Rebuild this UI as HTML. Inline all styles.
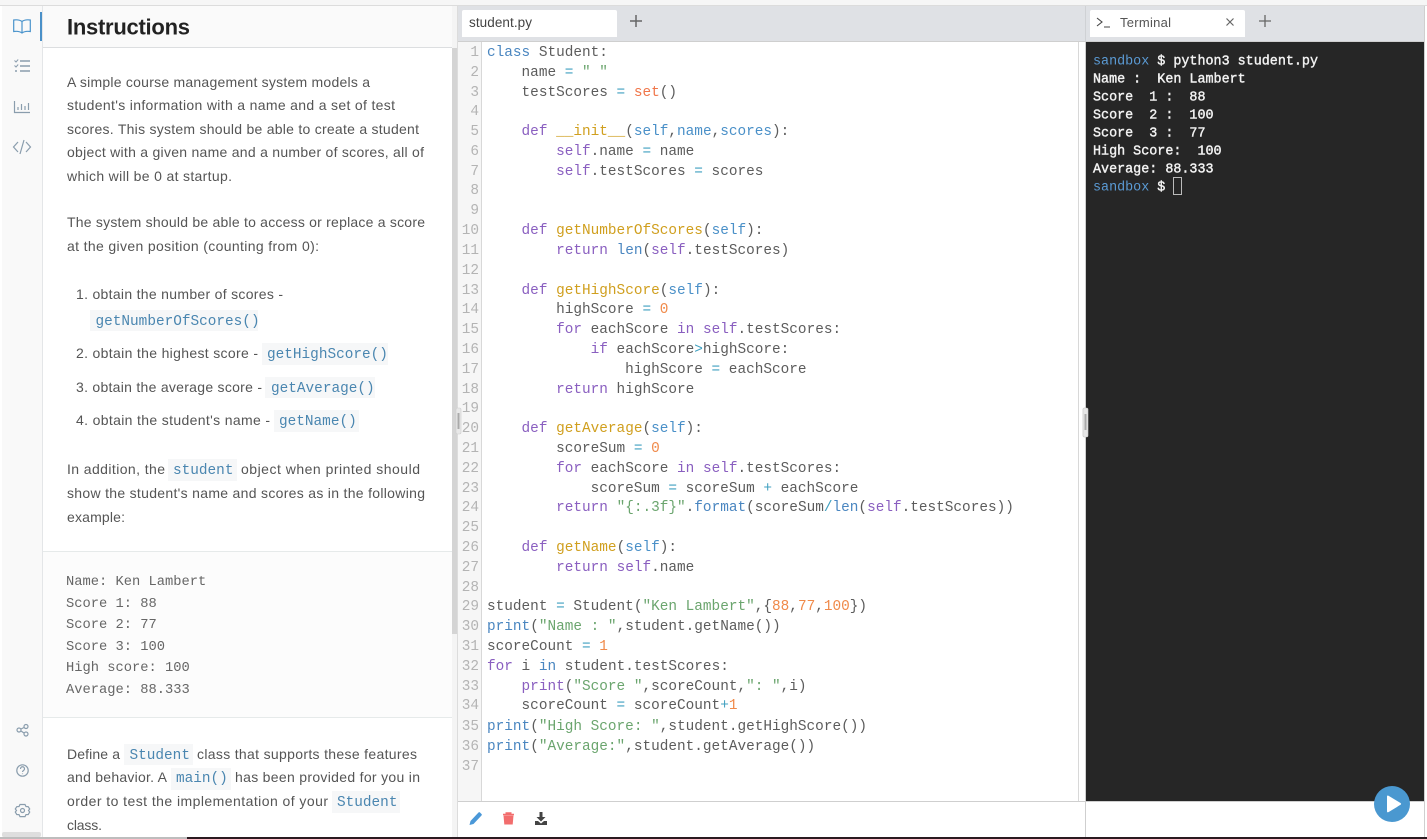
<!DOCTYPE html>
<html><head><meta charset="utf-8"><title>Instructions</title>
<style>
html,body{margin:0;padding:0;width:1427px;height:839px;overflow:hidden;background:#fff}
svg{display:block}
text{white-space:pre}
.t{font-family:"Liberation Sans",sans-serif;font-size:14px;fill:#555}
.m{font-family:"Liberation Mono",monospace;font-size:14.4px}
.c{fill:#4a86b0}
.p{font-family:"Liberation Mono",monospace;font-size:13.76px;fill:#666}
.code text{font-family:"Liberation Mono",monospace;font-size:14.4px;fill:#5c5c5c}
.ln{font-family:"Liberation Mono",monospace;font-size:14.4px;fill:#b4b4b4;text-anchor:end}
.term{font-family:"Liberation Mono",monospace;font-size:13.4px;fill:#f2f2f2;stroke:#f2f2f2;stroke-width:.4}
.k{fill:#4a86c0}.d{fill:#8a5fc0}.f{fill:#d09f1e}.a{fill:#4a90c8}.s{fill:#6ba56e}.n{fill:#f08a4a}.o{fill:#40a0c0}.r{fill:#f0764a}
.ic{fill:none;stroke:#8a9dad;stroke-width:1.2}
</style></head><body>
<svg width="1427" height="839" viewBox="0 0 1427 839" xmlns="http://www.w3.org/2000/svg">
<rect width="1427" height="839" fill="#fff"/>
<rect width="1427" height="5" fill="#f6f6f6"/>
<rect y="5" width="1427" height="1" fill="#dcdcdc"/>
<!-- rail -->
<rect x="2" y="6" width="40" height="831" fill="#f9f9f9"/>
<rect x="42" y="6" width="1" height="831" fill="#e4e6e8"/>
<rect x="40" y="12" width="2" height="29" fill="#4a90c8"/>
<path d="M22 21.5c-2-1.500-5-2-8.300-1.500v11.500c3.300-.5 6.300 0 8.300 1.500 2-1.500 5-2 8.300-1.500V20c-3.300-.5-6.300 0-8.300 1.500zM22 21.500V33" fill="none" stroke="#4a94cc" stroke-width="1.200"/>
<g class="ic"><path d="M20 61h10M20 66h10M20 71h10" stroke-width="1.500"/><path d="M14.500 60.500l1.500 1.500 2.200-2.500M14.500 65.500l1.500 1.500 2.200-2.500" stroke-width="1"/><path d="M15 71h2" stroke-width="1.500"/></g>
<g class="ic"><path d="M14.500 101v11.500H30"/><path d="M18 110v-3M21.500 110v-6M25 110v-4M28.500 110v-7"/></g>
<g class="ic"><path d="M18 142l-4.500 5 4.500 5M26 142l4.500 5-4.500 5M24 140l-4 14"/></g>
<g class="ic"><circle cx="19" cy="730" r="2"/><circle cx="26" cy="726.500" r="2"/><circle cx="26" cy="734" r="2"/><path d="M21 729l3-1.500M21 731l3 2"/></g>
<g class="ic"><circle cx="22.500" cy="770.500" r="5.700"/><path d="M20.500 769c0-3 4-3 4 0 0 1.500-2 1.500-2 3M22.500 773.500v.6"/></g>
<g class="ic"><circle cx="22.500" cy="810.500" r="2"/><path d="M20 804.500h5l1 2 2.200.2 1.500 2.300-1.200 1.500 1.200 1.500-1.500 2.500-2.200.1-1 2h-5l-1-2-2.200-.1-1.500-2.500 1.200-1.500-1.200-1.500 1.500-2.300 2.200-.2z"/></g>
<rect x="2" y="832" width="39" height="5" rx="2" fill="#dedede"/>
<!-- header -->
<rect x="43" y="6" width="409" height="41" fill="#fafafa"/>
<rect x="43" y="47" width="409" height="1" fill="#dcdee0"/>
<text x="67" y="34.500" textLength="123" font-family="Liberation Sans" font-weight="bold" font-size="22" fill="#222">Instructions</text>
<!-- scrollbar -->
<rect x="452" y="6" width="6" height="831" fill="#f4f4f4"/>
<rect x="452" y="48" width="5" height="586" fill="#d4d4d4"/>
<rect x="457" y="6" width="1" height="831" fill="#dcdcdc"/>
<!-- left text -->
<g class="t">
<text x="67" y="87" textLength="303">A simple course management system models a</text>
<text x="67" y="110" textLength="328">student's information with a name and a set of test</text>
<text x="67" y="134" textLength="352">scores. This system should be able to create a student</text>
<text x="67" y="157" textLength="357">object with a given name and a number of scores, all of</text>
<text x="67" y="181" textLength="165">which will be 0 at startup.</text>
<text x="67" y="227" textLength="358">The system should be able to access or replace a score</text>
<text x="67" y="251" textLength="252">at the given position (counting from 0):</text>
<text x="76" y="299" textLength="207">1. obtain the number of scores -</text>
<text x="76" y="358" textLength="182">2. obtain the highest score -</text>
<text x="76" y="392" textLength="186">3. obtain the average score -</text>
<text x="76" y="425" textLength="194">4. obtain the student's name -</text>
<text x="67" y="474" textLength="98">In addition, the</text>
<text x="241" y="474" textLength="179">object when printed should</text>
<text x="67" y="498" textLength="358">show the student's name and scores as in the following</text>
<text x="67" y="522" textLength="58">example:</text>
<text x="67" y="759" textLength="53">Define a</text>
<text x="197" y="759" textLength="220">class that supports these features</text>
<text x="67" y="782" textLength="100">and behavior. A</text>
<text x="235" y="782" textLength="185">has been provided for you in</text>
<text x="67" y="806" textLength="261">order to test the implementation of your</text>
<text x="67" y="830" textLength="35">class.</text>
</g>
<g fill="#f6f7f8">
<rect x="90" y="310" width="168" height="21"/><rect x="262" y="343" width="126" height="22"/><rect x="265" y="377" width="110" height="21"/><rect x="274" y="410" width="85" height="22"/>
<rect x="168" y="459" width="69" height="22"/><rect x="124" y="744" width="69" height="21"/><rect x="171" y="768" width="60" height="22"/><rect x="332" y="791" width="68" height="22"/>
</g>
<g class="m c">
<text x="95.500" y="325">getNumberOfScores()</text>
<text x="267" y="358">getHighScore()</text>
<text x="271" y="392">getAverage()</text>
<text x="279" y="425">getName()</text>
<text x="173" y="474">student</text>
<text x="129.500" y="759">Student</text>
<text x="176" y="782">main()</text>
<text x="337" y="806">Student</text>
</g>
<!-- sample block -->
<rect x="43" y="551" width="409" height="167" fill="#fcfcfc"/>
<rect x="43" y="551" width="409" height="1" fill="#e6eaea"/>
<rect x="43" y="717" width="409" height="1" fill="#e6eaea"/>
<g class="p">
<text x="66" y="585">Name: Ken Lambert</text>
<text x="66" y="607">Score 1: 88</text>
<text x="66" y="628">Score 2: 77</text>
<text x="66" y="650">Score 3: 100</text>
<text x="66" y="671">High score: 100</text>
<text x="66" y="693">Average: 88.333</text>
</g>
<!-- tab bars -->
<rect x="458" y="6" width="966" height="35" fill="#dfe1e5"/>
<rect x="458" y="41" width="966" height="1" fill="#cfcfcf"/>
<path d="M462 37V12q0-2 2-2h151q2 0 2 2v25z" fill="#fff"/>
<text x="469" y="27" textLength="63" font-family="Liberation Sans" font-size="13.500" fill="#444">student.py</text>
<path d="M636 15v12M630 21h12" stroke="#666" stroke-width="1.500"/>
<rect x="1085" y="6" width="1" height="35" fill="#cfd1d4"/>
<path d="M1090 37V12q0-2 2-2h151q2 0 2 2v25z" fill="#fff"/>
<path d="M1097 18l5 4-5 4M1104 27h6" fill="none" stroke="#444" stroke-width="1.100"/>
<text x="1120" y="27" textLength="51" font-family="Liberation Sans" font-size="13" fill="#555">Terminal</text>
<path d="M1226.500 18.500l7 7M1233.500 18.500l-7 7" stroke="#666" stroke-width="1.200"/>
<path d="M1265 15v12M1259 21h12" stroke="#666" stroke-width="1.300"/>
<!-- gutter -->
<rect x="458" y="42" width="23" height="759" fill="#f6f6f6"/>
<rect x="481" y="42" width="1" height="759" fill="#d8d8d8"/>
<rect x="1078" y="42" width="1" height="759" fill="#d8d8d8"/>
<rect x="1085" y="42" width="1" height="795" fill="#cfcfcf"/>
<rect x="458" y="801" width="966" height="1" fill="#cfcfcf"/>
<!-- line numbers -->
<g class="ln">
<text x="479" y="56">1</text><text x="479" y="76">2</text><text x="479" y="96">3</text><text x="479" y="115">4</text><text x="479" y="135">5</text><text x="479" y="155">6</text><text x="479" y="175">7</text><text x="479" y="194">8</text><text x="479" y="214">9</text><text x="479" y="234">10</text><text x="479" y="254">11</text><text x="479" y="274">12</text><text x="479" y="294">13</text><text x="479" y="313">14</text><text x="479" y="333">15</text><text x="479" y="353">16</text><text x="479" y="373">17</text><text x="479" y="393">18</text><text x="479" y="412">19</text><text x="479" y="432">20</text><text x="479" y="452">21</text><text x="479" y="472">22</text><text x="479" y="492">23</text><text x="479" y="511">24</text><text x="479" y="531">25</text><text x="479" y="551">26</text><text x="479" y="571">27</text><text x="479" y="591">28</text><text x="479" y="610">29</text><text x="479" y="630">30</text><text x="479" y="650">31</text><text x="479" y="670">32</text><text x="479" y="690">33</text><text x="479" y="709">34</text><text x="479" y="730">35</text><text x="479" y="750">36</text><text x="479" y="770">37</text>
</g>
<!-- splitter handles -->
<rect x="456" y="408" width="5" height="26" rx="1.500" fill="#e8e8e8" stroke="#ccc" stroke-width=".6"/>
<rect x="457.500" y="413" width="2" height="16" fill="#aaa"/>
<rect x="1083" y="408" width="5" height="29" rx="1.500" fill="#e6e6e6" stroke="#ccc" stroke-width=".6"/>
<!-- code -->
<g class="code">
<text x="487" y="56"><tspan class="k">class</tspan> Student:</text>
<text x="487" y="76">    name <tspan class="o">=</tspan> <tspan class="s">" "</tspan></text>
<text x="487" y="96">    testScores <tspan class="o">=</tspan> <tspan class="r">set</tspan>()</text>
<text x="487" y="135">    <tspan class="d">def</tspan> <tspan class="f">__init__</tspan>(<tspan class="a">self</tspan>,<tspan class="a">name</tspan>,<tspan class="a">scores</tspan>):</text>
<text x="487" y="155">        <tspan class="d">self</tspan>.name <tspan class="o">=</tspan> name</text>
<text x="487" y="175">        <tspan class="d">self</tspan>.testScores <tspan class="o">=</tspan> scores</text>
<text x="487" y="234">    <tspan class="d">def</tspan> <tspan class="f">getNumberOfScores</tspan>(<tspan class="a">self</tspan>):</text>
<text x="487" y="254">        <tspan class="d">return</tspan> <tspan class="k">len</tspan>(<tspan class="d">self</tspan>.testScores)</text>
<text x="487" y="294">    <tspan class="d">def</tspan> <tspan class="f">getHighScore</tspan>(<tspan class="a">self</tspan>):</text>
<text x="487" y="313">        highScore <tspan class="o">=</tspan> <tspan class="n">0</tspan></text>
<text x="487" y="333">        <tspan class="d">for</tspan> eachScore <tspan class="d">in</tspan> <tspan class="d">self</tspan>.testScores:</text>
<text x="487" y="353">            <tspan class="d">if</tspan> eachScore<tspan class="o">&gt;</tspan>highScore:</text>
<text x="487" y="373">                highScore <tspan class="o">=</tspan> eachScore</text>
<text x="487" y="393">        <tspan class="d">return</tspan> highScore</text>
<text x="487" y="432">    <tspan class="d">def</tspan> <tspan class="f">getAverage</tspan>(<tspan class="a">self</tspan>):</text>
<text x="487" y="452">        scoreSum <tspan class="o">=</tspan> <tspan class="n">0</tspan></text>
<text x="487" y="472">        <tspan class="d">for</tspan> eachScore <tspan class="d">in</tspan> <tspan class="d">self</tspan>.testScores:</text>
<text x="487" y="492">            scoreSum <tspan class="o">=</tspan> scoreSum <tspan class="o">+</tspan> eachScore</text>
<text x="487" y="511">        <tspan class="d">return</tspan> <tspan class="s">"{:.3f}"</tspan>.<tspan class="k">format</tspan>(scoreSum<tspan class="o">/</tspan><tspan class="k">len</tspan>(<tspan class="d">self</tspan>.testScores))</text>
<text x="487" y="551">    <tspan class="d">def</tspan> <tspan class="f">getName</tspan>(<tspan class="a">self</tspan>):</text>
<text x="487" y="571">        <tspan class="d">return</tspan> <tspan class="d">self</tspan>.name</text>
<text x="487" y="610">student <tspan class="o">=</tspan> Student(<tspan class="s">"Ken Lambert"</tspan>,{<tspan class="n">88</tspan>,<tspan class="n">77</tspan>,<tspan class="n">100</tspan>})</text>
<text x="487" y="630"><tspan class="k">print</tspan>(<tspan class="s">"Name : "</tspan>,student.getName())</text>
<text x="487" y="650">scoreCount <tspan class="o">=</tspan> <tspan class="n">1</tspan></text>
<text x="487" y="670"><tspan class="d">for</tspan> i <tspan class="k">in</tspan> student.testScores:</text>
<text x="487" y="690">    <tspan class="d">print</tspan>(<tspan class="s">"Score "</tspan>,scoreCount,<tspan class="s">": "</tspan>,i)</text>
<text x="487" y="709">    scoreCount <tspan class="o">=</tspan> scoreCount<tspan class="o">+</tspan><tspan class="n">1</tspan></text>
<text x="487" y="730"><tspan class="k">print</tspan>(<tspan class="s">"High Score: "</tspan>,student.getHighScore())</text>
<text x="487" y="750"><tspan class="k">print</tspan>(<tspan class="s">"Average:"</tspan>,student.getAverage())</text>
</g>
<!-- toolbar icons -->
<path d="M469.500 825l1-4 8-8.500a1 1 0 0 1 1.500 0l1.500 1.500a1 1 0 0 1 0 1.500l-8 8.500z" fill="#4a98d8"/>
<path d="M503 814.500h11M505.500 813h6" stroke="#f26d6d" stroke-width="1.600" fill="none"/>
<path d="M503.500 815.500h10l-.8 9h-8.400z" fill="#f26d6d"/>
<path d="M539.500 812h3v5h3l-4.500 4.500-4.500-4.500h3z" fill="#444"/>
<path d="M535 821h3l3 2.500 3-2.500h3v4h-12z" fill="#444"/>
<!-- terminal -->
<rect x="1086" y="42" width="338" height="759" fill="#262626"/>
<rect x="1424" y="6" width="1" height="831" fill="#cfcfcf"/>
<rect x="1083" y="408" width="5" height="29" rx="1.500" fill="#e6e6e6" stroke="#ccc" stroke-width=".6"/>
<rect x="1084.500" y="414" width="2" height="16" fill="#aaa"/>
<g class="term">
<text x="1093" y="64.500"><tspan fill="#5b9bd5" stroke="none">sandbox</tspan> $ python3 student.py</text>
<text x="1093" y="82.500">Name :  Ken Lambert</text>
<text x="1093" y="100.500">Score  1 :  88</text>
<text x="1093" y="118.500">Score  2 :  100</text>
<text x="1093" y="136.500">Score  3 :  77</text>
<text x="1093" y="154.500">High Score:  100</text>
<text x="1093" y="172.500">Average: 88.333</text>
<text x="1093" y="190.500"><tspan fill="#5b9bd5" stroke="none">sandbox</tspan> $</text>
</g>
<rect x="1173.500" y="177.500" width="8" height="17" fill="none" stroke="#bbb" stroke-width="1"/>
<!-- run -->
<circle cx="1392" cy="804" r="18" fill="#4a98d0"/>
<path d="M1387 796.500q0-1.500 1.500-.8l12 7.300q1.200.9 0 1.800l-12 7.300q-1.500.7-1.500-.8z" fill="#fff"/>
<!-- bottom strip -->
<rect y="837" width="187" height="2" fill="#bdbdbd"/>
<rect x="187" y="837" width="1240" height="2" fill="#2a1a20"/>
</svg>
</body></html>
